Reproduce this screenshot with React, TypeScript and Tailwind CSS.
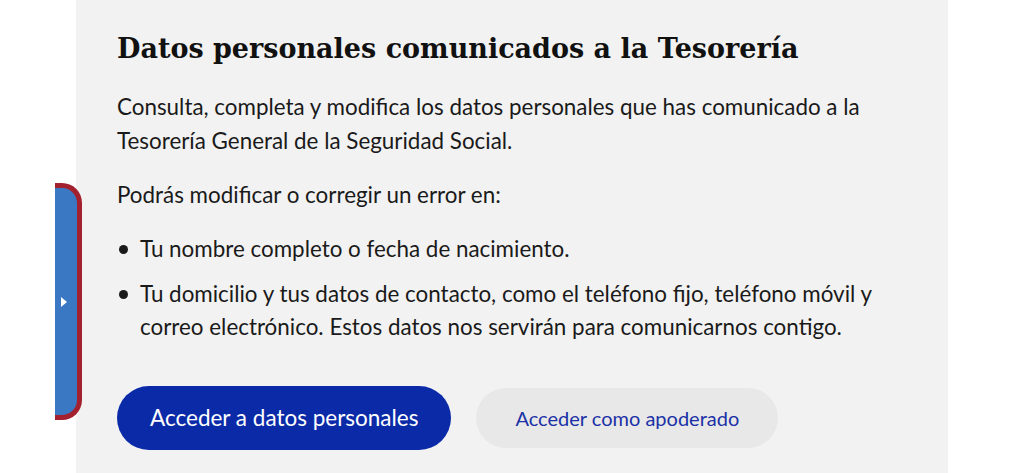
export default function App() {
  return (
    <div className="relative h-[473px] w-full overflow-hidden bg-white font-['Lato',sans-serif] text-[#1a1a1a]">
      {/* side tab */}
      <button
        aria-label="Abrir"
        className="absolute left-[55px] top-[183px] z-10 flex h-[237px] w-[27px] items-center justify-center rounded-r-[20px] border-y-[5px] border-r-[5px] border-[#a3212f] bg-[#3b78c4] pr-[4px]"
      >
        <span className="h-0 w-0 border-y-[5px] border-l-[6px] border-y-transparent border-l-white" />
      </button>

      <section className="ml-[76px] min-h-[473px] w-[872px] bg-[#f2f2f2] px-[41px] pt-[31px] pb-10">
        <h1 className="font-['DejaVu_Serif',serif] text-[27px] leading-[36px] font-bold text-[#111]">
          Datos personales comunicados a la Tesorería
        </h1>

        <p className="mt-[23px] text-[22.4px] leading-[33.5px]">
          Consulta, completa y modifica los datos personales que has comunicado a la Tesorería
          General de la Seguridad Social.
        </p>

        <p className="mt-[21px] text-[22.4px] leading-[33.5px]">Podrás modificar o corregir un error en:</p>

        <ul className="mt-[20px] flex flex-col gap-[11.5px] text-[22.4px] leading-[33.5px]">
          <li className="flex gap-[12px]">
            <span className="mt-[13px] ml-[2px] h-[9px] w-[9px] shrink-0 rounded-full bg-[#1a1a1a]" />
            <span>Tu nombre completo o fecha de nacimiento.</span>
          </li>
          <li className="flex gap-[12px]">
            <span className="mt-[13px] ml-[2px] h-[9px] w-[9px] shrink-0 rounded-full bg-[#1a1a1a]" />
            <span>
              Tu domicilio y tus datos de contacto, como el teléfono fijo, teléfono móvil y correo
              electrónico. Estos datos nos servirán para comunicarnos contigo.
            </span>
          </li>
        </ul>

        <div className="mt-[42px] flex items-center gap-[25px]">
          <button className="h-[64px] rounded-full bg-[#0b2aa8] px-[33px] text-[22.5px] text-white">
            Acceder a datos personales
          </button>
          <button className="h-[60px] rounded-full bg-[#e8e8e8] px-[39px] text-[20px] text-[#1b31a6]">
            Acceder como apoderado
          </button>
        </div>
      </section>
    </div>
  );
}
